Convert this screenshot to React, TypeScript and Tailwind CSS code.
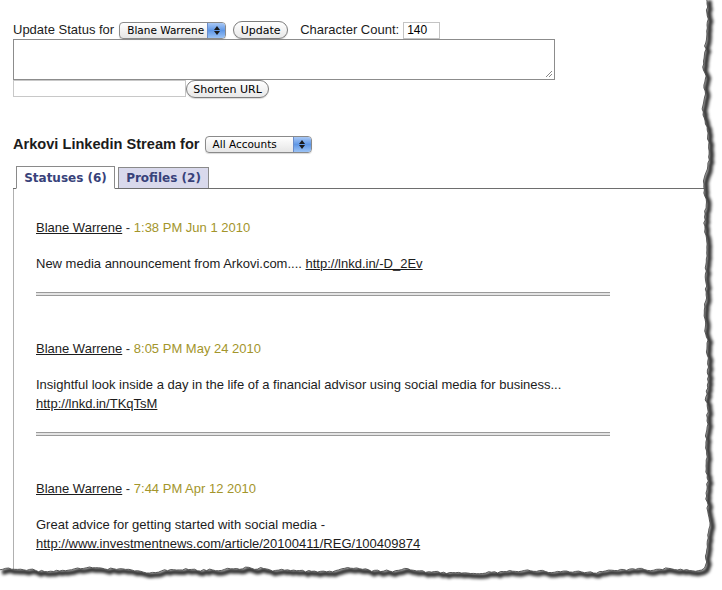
import React from "react";

function rng(seed: number) {
  let s = seed;
  return () => {
    s = (s * 1103515245 + 12345) % 2147483648;
    return s / 2147483648;
  };
}

function buildEdge() {
  const r = rng(11);
  const pts: [number, number][] = [];
  let x = 706;
  for (let y = -2; y <= 570; y += 3) {
    x += (r() - 0.5) * 2.6;
    x += (706 - x) * 0.08;
    x = Math.max(700, Math.min(712, x));
    pts.push([x + (r() - 0.5) * 1.0, y]);
  }
  let y = 571;
  for (let xx = pts[pts.length - 1][0] - 3; xx >= -3; xx -= 3) {
    y += (r() - 0.5) * 2.4;
    y += (571 - y) * 0.08;
    y = Math.max(565, Math.min(577, y));
    pts.push([xx, y + (r() - 0.5) * 1.0]);
  }
  return pts;
}

const edge = buildEdge();
const edgeD = "M" + edge.map(([a, b]) => `${a.toFixed(1)} ${b.toFixed(1)}`).join(" L");
const outsideD = edgeD + " L-4 600 L730 600 L730 -4 Z";

function MacSelect({ label, width }: { label: string; width: string }) {
  return (
    <div
      className={`flex h-[17px] ${width} items-stretch overflow-hidden rounded-[4px] border border-[#8a8a8a] bg-gradient-to-b from-white to-[#e6e6e6] shadow-[0_1px_1px_rgba(0,0,0,0.15)]`}
    >
      <div className="flex flex-1 items-center whitespace-nowrap pl-[7px] text-[10.5px] leading-none text-black [font-family:'DejaVu_Sans',sans-serif]">
        {label}
      </div>
      <div className="flex w-[18px] flex-col items-center justify-center gap-[1px] border-l border-[#6b8cc9] bg-gradient-to-b from-[#a9c8f5] via-[#5f97e6] to-[#9cc3f5]">
        <svg width="6" height="4" viewBox="0 0 6 4">
          <path d="M0 4 L3 0 L6 4 Z" fill="#1b1b1b" />
        </svg>
        <svg width="6" height="4" viewBox="0 0 6 4">
          <path d="M0 0 L3 4 L6 0 Z" fill="#1b1b1b" />
        </svg>
      </div>
    </div>
  );
}

function MacButton({ label, width }: { label: string; width: string }) {
  return (
    <div
      className={`flex h-[18px] ${width} items-center justify-center whitespace-nowrap rounded-full border border-[#7d7d7d] bg-gradient-to-b from-white to-[#e8e8e8] text-[11px] leading-none text-black [font-family:'DejaVu_Sans',sans-serif] shadow-[0_1px_1px_rgba(0,0,0,0.15)]`}
    >
      {label}
    </div>
  );
}

function Entry({ date, text, link, last }: { date: string; text: string; link: string; last?: boolean }) {
  return (
    <div>
      <div className="leading-[19px]">
        <span className="text-[#1c1c1c] underline">Blane Warrene</span>
        <span className="text-[#333]"> - </span>
        <span className="text-[#a3952b]">{date}</span>
      </div>
      <div className="mt-[17px] w-[574px] leading-[19px] text-[#1c1c1c]">
        {text} <span className="underline">{link}</span>
      </div>
      {!last && (
        <div className="mb-[43px] mt-[19px] h-[4px] w-[574px] border-y border-[#9a9a9a] bg-[#e4e4e4]" />
      )}
    </div>
  );
}

export default function App() {
  return (
    <div className="relative h-[590px] w-[722px] overflow-hidden bg-white text-[13px] [font-family:'Liberation_Sans',Arial,sans-serif]">
      <div className="pl-[13px] pt-[21px]">
        <div className="flex h-[18px] items-center">
          <span className="mr-[5px] text-[#1c1c1c]">Update Status for</span>
          <MacSelect label="Blane Warrene" width="w-[107px]" />
          <div className="ml-[7px]">
            <MacButton label="Update" width="w-[55px]" />
          </div>
          <span className="ml-[12px] text-[#1c1c1c]">Character Count:</span>
          <div className="ml-[4px] flex h-[17px] w-[37px] items-center border border-[#c4c4c4] pl-[3px] text-[12px] text-black">
            140
          </div>
        </div>
        <div className="relative h-[41px] w-[542px] border border-[#8c8c8c]">
          <svg className="absolute bottom-[1px] right-[1px]" width="8" height="8" viewBox="0 0 8 8">
            <path d="M1 7 L7 1 M4 7 L7 4" stroke="#888" strokeWidth="1" />
          </svg>
        </div>
        <div className="flex items-start">
          <div className="h-[17px] w-[173px] border border-[#c8c8c8]" />
          <MacButton label="Shorten URL" width="w-[83px]" />
        </div>

        <div className="mt-[38px] flex h-[17px] items-center">
          <span className="mr-[5px] text-[14.6px] font-bold text-[#1c1c1c]">Arkovi Linkedin Stream for</span>
          <MacSelect label="All Accounts" width="w-[107px]" />
        </div>

        <div className="mt-[13px] flex items-end gap-[3px] border-b border-[#6e6e6e] pl-[3px] [font-family:'DejaVu_Sans',Verdana,sans-serif]">
          <div className="-mb-px flex h-[23px] w-[99px] items-center justify-center border border-[#8a8a8a] border-b-white bg-white text-[12px] font-bold text-[#38427a]">
            Statuses (6)
          </div>
          <div className="flex h-[21px] w-[91px] items-center justify-center border border-b-0 border-[#8a8a8a] bg-[#d9d9ec] text-[12px] font-bold text-[#38427a]">
            Profiles (2)
          </div>
        </div>

        <div className="h-[400px] border-l border-[#b0b0b0] pl-[22px] pt-[29px]">
          <Entry
            date="1:38 PM Jun 1 2010"
            text="New media announcement from Arkovi.com...."
            link="http://lnkd.in/-D_2Ev"
          />
          <Entry
            date="8:05 PM May 24 2010"
            text="Insightful look inside a day in the life of a financial advisor using social media for business..."
            link="http://lnkd.in/TKqTsM"
          />
          <Entry
            date="7:44 PM Apr 12 2010"
            text="Great advice for getting started with social media -"
            link="http://www.investmentnews.com/article/20100411/REG/100409874"
            last
          />
        </div>
      </div>

      <svg className="pointer-events-none absolute left-0 top-0" width="722" height="590" viewBox="0 0 722 590">
        <defs>
          <filter id="blur" x="-10%" y="-10%" width="120%" height="120%">
            <feGaussianBlur stdDeviation="1.8" />
          </filter>
          <clipPath id="outside">
            <path d={outsideD} />
          </clipPath>
        </defs>
        <path d={outsideD} fill="#ffffff" />
        <g clipPath="url(#outside)">
          <path d={edgeD} transform="translate(2.5 2.5)" fill="none" stroke="#000" strokeOpacity="0.8" strokeWidth="5" filter="url(#blur)" />
        </g>
        <path d={edgeD} fill="none" stroke="#3a3a3a" strokeWidth="0.8" />
      </svg>
    </div>
  );
}
